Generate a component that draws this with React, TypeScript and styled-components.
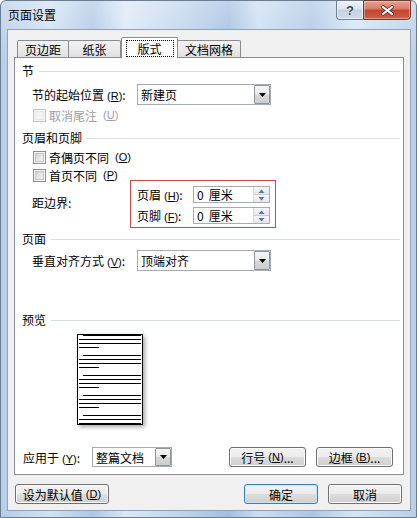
import React from "react";
import styled, { createGlobalStyle } from "styled-components";

const GlobalStyle = createGlobalStyle`
  html, body {
    margin: 0;
    padding: 0;
  }
  body {
    width: 417px;
    height: 518px;
    overflow: hidden;
    font-family: "Noto Sans CJK SC", "Liberation Sans", sans-serif;
    font-size: 12px;
    color: #000;
  }
`;

const Window = styled.div`
  box-sizing: border-box;
  width: 417px;
  height: 518px;
  border: 1px solid #6b7d93;
  border-radius: 6px 6px 0 0;
  padding: 0 5px 6px 6px;
  display: flex;
  flex-direction: column;
  background: linear-gradient(rgba(255, 255, 255, 0.35), rgba(255, 255, 255, 0.05) 60px),
    linear-gradient(
      90deg,
      #b3cbe6 0%,
      #cfe0f2 12%,
      #aac4e4 22%,
      #d9e7f5 30%,
      #b8cfe9 45%,
      #9dbbe0 55%,
      #c9dcf0 62%,
      #a9c3e3 75%,
      #d4e4f4 85%,
      #b5cce7 100%
    );
`;

const TitleBar = styled.div`
  height: 28px;
  display: flex;
  align-items: flex-start;
`;

const Title = styled.div`
  padding-left: 1px;
  line-height: 28px;
`;

const Caption = styled.div`
  margin-left: auto;
  margin-top: -1px;
  display: flex;
`;

const HelpButton = styled.div`
  box-sizing: border-box;
  width: 27px;
  height: 20px;
  border: 1px solid #6d7f95;
  border-right: none;
  border-radius: 0 0 0 4px;
  background: linear-gradient(#eef3f9 0%, #dbe5f0 45%, #c3d2e3 50%, #cfdcea 100%);
  box-shadow: inset 0 0 0 1px rgba(255, 255, 255, 0.6);
  display: flex;
  align-items: center;
  justify-content: center;
  font-family: "Liberation Sans", sans-serif;
  font-weight: bold;
  font-size: 13px;
  color: #3b4350;
  text-shadow: 0 0 1px #fff, 0 0 1px #fff;
`;

const CloseButton = styled.div`
  box-sizing: border-box;
  width: 48px;
  height: 20px;
  border: 1px solid #6a3a35;
  border-radius: 0 0 4px 0;
  background: linear-gradient(#e8a090 0%, #d77a68 45%, #c3432a 50%, #d0614a 100%);
  box-shadow: inset 0 0 0 1px rgba(255, 220, 210, 0.45);
  display: flex;
  align-items: center;
  justify-content: center;
`;

const Client = styled.div`
  flex: 1;
  border: 1px solid #8fa2ba;
  background: #f0f0f0;
  padding: 7px 6px 6px 6px;
  display: flex;
  flex-direction: column;
`;

const TabStrip = styled.div`
  height: 20px;
  display: flex;
  align-items: flex-end;
  padding-left: 3px;
`;

const Tab = styled.div<{ $w: number; $active?: boolean; $overlap?: boolean }>`
  box-sizing: border-box;
  position: relative;
  width: ${(p) => p.$w}px;
  height: ${(p) => (p.$active ? 21 : 17)}px;
  margin-left: ${(p) => (p.$overlap ? -1 : 0)}px;
  margin-bottom: ${(p) => (p.$active ? -1 : 0)}px;
  border: 1px solid #898c95;
  border-bottom: none;
  border-radius: 2px 2px 0 0;
  background: ${(p) => (p.$active ? "#fff" : "linear-gradient(#f2f2f2, #e1e1e1)")};
  z-index: ${(p) => (p.$active ? 2 : 0)};
  display: flex;
  justify-content: center;
  padding-top: ${(p) => (p.$active ? 3 : 1)}px;
  line-height: 15px;
`;

const FocusRing = styled.span`
  box-sizing: border-box;
  width: 48px;
  height: 17px;
  border: 1px dotted #000;
  display: flex;
  align-items: center;
  justify-content: center;
  margin-top: -1px;
`;

const Panel = styled.div`
  box-sizing: border-box;
  height: 418px;
  border: 1px solid #898c95;
  background: #fff;
  padding: 5px 3px 0 7px;
  display: flex;
  flex-direction: column;
`;

const SectionHead = styled.div<{ $top: number }>`
  margin-top: ${(p) => p.$top}px;
  height: 16px;
  line-height: 16px;
  display: flex;
  align-items: center;
  gap: 5px;

  &::after {
    content: "";
    flex: 1;
    height: 1px;
    background: #d5dfe5;
  }
`;

const Row = styled.div<{ $top: number }>`
  margin-top: ${(p) => p.$top}px;
  margin-left: 10px;
  display: flex;
  align-items: center;
`;

const Label = styled.span<{ $w: number }>`
  width: ${(p) => p.$w}px;
  flex-shrink: 0;
  white-space: nowrap;
`;

// the "(R)" access key hint after a label
const MnemonicText = styled.span`
  font-family: "Liberation Sans", sans-serif;
  font-size: 11px;
  margin-left: 3px;

  u {
    text-decoration: underline;
  }
`;

const Mn = ({ k }: { k: string }) => (
  <MnemonicText>
    (<u>{k}</u>)
  </MnemonicText>
);

const Combo = styled.div<{ $w: number; $h: number }>`
  box-sizing: border-box;
  width: ${(p) => p.$w}px;
  height: ${(p) => p.$h}px;
  border: 1px solid #a5acb5;
  background: #fff;
  display: flex;
  align-items: stretch;
`;

const ComboText = styled.span`
  flex: 1;
  padding-left: 3px;
  display: flex;
  align-items: center;
`;

const DropButton = styled.span`
  box-sizing: border-box;
  width: 16px;
  border: 1px solid #8f949b;
  border-radius: 1px;
  background: linear-gradient(#f6f6f6 0%, #e8e8e8 50%, #d8d8d8 51%, #cdcdcd 100%);
  display: flex;
  align-items: center;
  justify-content: center;
`;

const CheckRow = styled.div<{ $top: number; $left: number; $disabled?: boolean }>`
  margin-top: ${(p) => p.$top}px;
  margin-left: ${(p) => p.$left}px;
  height: 14px;
  display: flex;
  align-items: center;
  gap: 3px;
  color: ${(p) => (p.$disabled ? "#a0a0a0" : "#000")};
  white-space: nowrap;
`;

const CheckBox = styled.span<{ $disabled?: boolean }>`
  box-sizing: border-box;
  width: 13px;
  height: 13px;
  flex-shrink: 0;
  border: 1px solid ${(p) => (p.$disabled ? "#c4c4c4" : "#8e8f8f")};
  background: ${(p) =>
    p.$disabled ? "#f2f2f2" : "linear-gradient(135deg, #cbcbcb 0%, #e9e9e9 60%, #f7f7f7 100%)"};
  box-shadow: inset 0 0 0 1px #f6f6f6, inset 0 0 0 2px ${(p) => (p.$disabled ? "#e8e8e8" : "#c4c4c4")};
`;

const MarginBlock = styled.div`
  margin-top: 4px;
  margin-left: 10px;
  display: flex;
  align-items: flex-start;
`;

const LeftCol = styled.div`
  width: 98px;
  display: flex;
  flex-direction: column;
`;

const PlainLabel = styled.div<{ $top: number }>`
  margin-top: ${(p) => p.$top}px;
  line-height: 16px;
`;

const RedBox = styled.div`
  box-sizing: border-box;
  margin-top: 12px;
  width: 146px;
  height: 48px;
  border: 1px solid #c84848;
  padding: 5px 5px 0 6px;
  display: flex;
  flex-direction: column;
  gap: 4px;
`;

const SpinRow = styled.div`
  display: flex;
  align-items: center;
`;

const SpinBox = styled.div`
  box-sizing: border-box;
  width: 77px;
  height: 17px;
  border: 1px solid #a5acb5;
  background: #fff;
  display: flex;
`;

const SpinText = styled.span`
  flex: 1;
  padding-left: 3px;
  display: flex;
  align-items: center;
  gap: 5px;
`;

const SpinButtons = styled.span`
  width: 15px;
  display: flex;
  flex-direction: column;
  border-left: 1px solid #d4d7dc;
`;

const SpinHalf = styled.span<{ $down?: boolean }>`
  flex: 1;
  display: flex;
  align-items: center;
  justify-content: center;
  background: linear-gradient(#f6f7f9, #e3e6ea);
  border-top: ${(p) => (p.$down ? "1px solid #c9ced5" : "none")};
`;

const Preview = styled.svg`
  display: block;
  margin-top: 6px;
  margin-left: 55px;
  filter: drop-shadow(2px 2px 2px rgba(0, 0, 0, 0.35));
`;

const ApplyRow = styled.div`
  margin-top: 22px;
  margin-left: 1px;
  margin-right: 7px;
  height: 20px;
  display: flex;
  align-items: center;
`;

const Button = styled.div<{ $w: number; $default?: boolean; $left?: number }>`
  box-sizing: border-box;
  width: ${(p) => p.$w}px;
  height: 20px;
  margin-left: ${(p) => (p.$left === undefined ? "auto" : `${p.$left}px`)};
  border: 1px solid ${(p) => (p.$default ? "#3c7fb1" : "#707070")};
  border-radius: 3px;
  background: linear-gradient(#f2f2f2 0%, #ebebeb 50%, #dddddd 51%, #cfcfcf 100%);
  box-shadow: inset 0 0 0 1px ${(p) => (p.$default ? "#c3e3f7" : "#fbfbfb")};
  display: flex;
  align-items: center;
  justify-content: center;
  white-space: nowrap;
`;

const BottomRow = styled.div`
  margin-top: 9px;
  margin-left: 1px;
  margin-right: 2px;
  display: flex;
`;

const Triangle = ({ up, color = "#000" }: { up?: boolean; color?: string }) => (
  <svg width="7" height="4" viewBox="0 0 7 4">
    <polygon points={up ? "0,4 7,4 3.5,0" : "0,0 7,0 3.5,4"} fill={color} />
  </svg>
);

const SmallArrow = ({ up }: { up?: boolean }) => (
  <svg width="7" height="4" viewBox="0 0 7 4">
    <polygon points={up ? "0.5,4 6.5,4 3.5,0.5" : "0.5,0 6.5,0 3.5,3.5"} fill="#5a73a8" />
  </svg>
);

const Select = ({ w, h, value }: { w: number; h: number; value: string }) => (
  <Combo $w={w} $h={h}>
    <ComboText>{value}</ComboText>
    <DropButton>
      <Triangle />
    </DropButton>
  </Combo>
);

const Spinner = ({ value, unit }: { value: string; unit: string }) => (
  <SpinBox>
    <SpinText>
      <span>{value}</span>
      <span>{unit}</span>
    </SpinText>
    <SpinButtons>
      <SpinHalf>
        <SmallArrow up />
      </SpinHalf>
      <SpinHalf $down>
        <SmallArrow />
      </SpinHalf>
    </SpinButtons>
  </SpinBox>
);

// paragraph lines inside the preview page: indented first line, two full, one short
const previewLines = () => {
  const lines: { x1: number; x2: number; y: number }[] = [];
  for (let p = 0; p < 5; p++) {
    const base = 1.5 + p * 20;
    lines.push({ x1: 6, x2: 64, y: base });
    lines.push({ x1: 2, x2: 64, y: base + 4 });
    lines.push({ x1: 2, x2: 64, y: base + 8 });
    lines.push({ x1: 2, x2: 22, y: base + 12 });
  }
  return lines.filter((l) => l.y < 90);
};

const PagePreview = () => (
  <Preview width="66" height="91" viewBox="0 0 66 91">
    <rect x="0.5" y="0.5" width="65" height="90" fill="#fff" stroke="#000" />
    {previewLines().map((l, i) => (
      <line key={i} x1={l.x1} x2={l.x2} y1={l.y} y2={l.y} stroke="#000" strokeWidth="1" />
    ))}
  </Preview>
);

export default function App() {
  return (
    <>
      <GlobalStyle />
      <Window>
        <TitleBar>
          <Title>页面设置</Title>
          <Caption>
            <HelpButton>?</HelpButton>
            <CloseButton>
              <svg width="13" height="11" viewBox="0 0 13 11">
                <g strokeLinecap="square">
                  <line x1="2" y1="2" x2="11" y2="9" stroke="#5b2b24" strokeWidth="3.6" />
                  <line x1="11" y1="2" x2="2" y2="9" stroke="#5b2b24" strokeWidth="3.6" />
                  <line x1="2" y1="2" x2="11" y2="9" stroke="#fff" strokeWidth="2" />
                  <line x1="11" y1="2" x2="2" y2="9" stroke="#fff" strokeWidth="2" />
                </g>
              </svg>
            </CloseButton>
          </Caption>
        </TitleBar>

        <Client>
          <TabStrip>
            <Tab $w={52}>页边距</Tab>
            <Tab $w={53} $overlap>
              纸张
            </Tab>
            <Tab $w={57} $active>
              <FocusRing>版式</FocusRing>
            </Tab>
            <Tab $w={64} $overlap>
              文档网格
            </Tab>
          </TabStrip>

          <Panel>
            <SectionHead $top={0}>节</SectionHead>
            <Row $top={5}>
              <Label $w={105}>
                节的起始位置<Mn k="R" />:
              </Label>
              <Select w={134} h={21} value="新建页" />
            </Row>
            <CheckRow $top={3} $left={11} $disabled>
              <CheckBox $disabled />
              取消尾注<Mn k="U" />
            </CheckRow>

            <SectionHead $top={8}>页眉和页脚</SectionHead>
            <CheckRow $top={4} $left={11}>
              <CheckBox />
              奇偶页不同<Mn k="O" />
            </CheckRow>
            <MarginBlock>
              <LeftCol>
                <CheckRow $top={0} $left={1}>
                  <CheckBox />
                  首页不同<Mn k="P" />
                </CheckRow>
                <PlainLabel $top={13}>距边界:</PlainLabel>
              </LeftCol>
              <RedBox>
                <SpinRow>
                  <Label $w={56}>
                    页眉<Mn k="H" />:
                  </Label>
                  <Spinner value="0" unit="厘米" />
                </SpinRow>
                <SpinRow>
                  <Label $w={56}>
                    页脚<Mn k="F" />:
                  </Label>
                  <Spinner value="0" unit="厘米" />
                </SpinRow>
              </RedBox>
            </MarginBlock>

            <SectionHead $top={3}>页面</SectionHead>
            <Row $top={3}>
              <Label $w={105}>
                垂直对齐方式<Mn k="V" />:
              </Label>
              <Select w={134} h={21} value="顶端对齐" />
            </Row>

            <SectionHead $top={41}>预览</SectionHead>
            <PagePreview />

            <ApplyRow>
              <Label $w={69}>
                应用于<Mn k="Y" />:
              </Label>
              <Select w={80} h={20} value="整篇文档" />
              <Button $w={77}>
                行号<Mn k="N" />...
              </Button>
              <Button $w={77} $left={10}>
                边框<Mn k="B" />...
              </Button>
            </ApplyRow>
          </Panel>

          <BottomRow>
            <Button $w={94} $left={0}>
              设为默认值<Mn k="D" />
            </Button>
            <Button $w={74} $default>
              确定
            </Button>
            <Button $w={74} $left={10}>
              取消
            </Button>
          </BottomRow>
        </Client>
      </Window>
    </>
  );
}
